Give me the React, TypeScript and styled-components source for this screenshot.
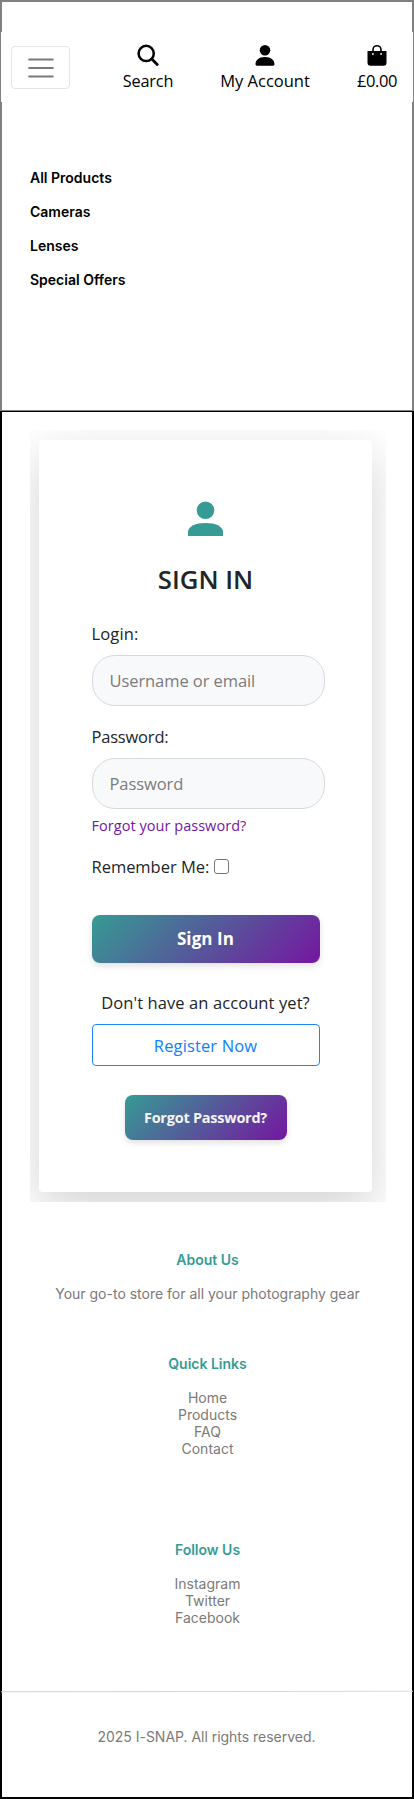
import React from "react";
import styled, { createGlobalStyle } from "styled-components";

const GlobalStyle = createGlobalStyle`
  *, *::before, *::after { box-sizing: border-box; }
  body { margin: 0; background: #fff; }
`;

const ui = `"Open Sans", "Noto Sans", sans-serif`;

const Page = styled.div`
  width: 414px;
  height: 1799px;
  display: flex;
  flex-direction: column;
  background: #fff;
  font-family: Inter, sans-serif;
`;

const Header = styled.header`
  height: 411px;
  padding-top: 30px;
  border: 2px solid #808080;
  border-bottom: 1px solid #808080;
`;

const NavBar = styled.div`
  display: flex;
  align-items: flex-start;
  height: 70px;
  margin: 0 -1px;
  padding: 14px 0 0 10px;
  background: #fff;
`;

const Toggler = styled.button`
  flex: none;
  width: 59px;
  height: 43px;
  padding: 0;
  display: flex;
  align-items: center;
  justify-content: center;
  background: #fff;
  border: 1px solid #e5e5e5;
  border-radius: 4px;
`;

const NavItem = styled.a<{ $left: number; $width: number }>`
  flex: none;
  display: flex;
  flex-direction: column;
  align-items: center;
  gap: 3px;
  width: ${(p) => p.$width}px;
  margin-left: ${(p) => p.$left}px;
  margin-top: -2px;
  color: #000;
`;

const Text = styled.span<{ $size?: number; $track?: number; $weight?: number; $color?: string; $line?: number }>`
  display: block;
  white-space: nowrap;
  font-family: ${ui};
  font-size: ${(p) => p.$size ?? 16.5}px;
  line-height: ${(p) => p.$line ?? 24}px;
  letter-spacing: ${(p) => p.$track ?? 0}px;
  font-weight: ${(p) => p.$weight ?? 400};
  color: ${(p) => p.$color ?? "#212529"};
`;

const Categories = styled.nav`
  display: flex;
  flex-direction: column;
  gap: 17px;
  padding: 67px 0 0 28px;
`;

const Category = styled.a`
  font-size: 14px;
  line-height: 17px;
  font-weight: 600;
  color: #000;
`;

const Main = styled.main`
  flex: 1;
  display: flex;
  flex-direction: column;
  border: 2px solid #000;
  border-top-width: 1px;
`;

const Backdrop = styled.section`
  width: 356px;
  height: 772px;
  margin: 18px 0 0 28px;
  padding: 10px 14px 10px 9px;
  overflow: hidden;
`;

const Card = styled.form`
  width: 333px;
  height: 752px;
  padding: 61px 52.5px 0 52.5px;
  display: flex;
  flex-direction: column;
  background: #fff;
  border-radius: 4px;
  box-shadow: 0 16px 48px rgba(0, 0, 0, 0.175);
`;

const Center = styled.div<{ $top?: number }>`
  display: flex;
  justify-content: center;
  margin-top: ${(p) => p.$top ?? 0}px;
`;

const Avatar = styled.svg`
  display: block;
  width: 35px;
  height: 36px;
  fill: #369b94;
`;

const Field = styled.label<{ $top: number }>`
  display: block;
  margin-top: ${(p) => p.$top}px;
`;

const Input = styled.input`
  display: block;
  width: 233px;
  height: 51px;
  margin-top: 9px;
  padding: 0 17px;
  font-family: ${ui};
  font-size: 16.5px;
  letter-spacing: -0.08px;
  background: #f8f9fb;
  border: 1px solid #d5d9de;
  border-radius: 23px;
  &::placeholder { color: #7b7b7b; opacity: 1; }
`;

const Remember = styled.label`
  display: flex;
  align-items: center;
  gap: 4.5px;
  margin-top: 13px;
`;

const Checkbox = styled.input`
  appearance: none;
  width: 15px;
  height: 15px;
  margin: 0 0 1px;
  border: 1px solid #767676;
  border-radius: 3px;
`;

const GradientButton = styled.button<{ $width: number; $height: number }>`
  width: ${(p) => p.$width}px;
  height: ${(p) => p.$height}px;
  padding: 0;
  display: flex;
  align-items: center;
  justify-content: center;
  border: 0;
  border-radius: 8px;
  background: linear-gradient(135deg, #369b94, #7516a0);
  box-shadow: 0 3px 6px rgba(0, 0, 0, 0.12);
`;

const OutlineButton = styled.button`
  width: 228px;
  height: 42px;
  margin-top: 9px;
  padding: 1px 0 0;
  display: flex;
  align-items: center;
  justify-content: center;
  background: #fff;
  border: 1px solid #1a86fb;
  border-radius: 4px;
`;

const FooterBlock = styled.section<{ $top: number }>`
  margin-top: ${(p) => p.$top}px;
  padding-left: 1px;
  display: flex;
  flex-direction: column;
  align-items: center;
  font-size: 14px;
  line-height: 17px;
  color: #7b7979;
`;

const Copyright = styled(FooterBlock)`
  padding: 0 1px 0 0;
  letter-spacing: -0.02px;
`;

const FooterTitle = styled.h2`
  margin: 0 0 17px;
  font-size: 14px;
  line-height: 17px;
  font-weight: 600;
  color: #369b94;
`;

const Rule = styled.div`
  height: 1px;
  margin: 65px -1px 0;
  background: linear-gradient(90deg, #cfcfcf, #dadada);
  transform: rotate(-0.08deg);
`;

export default function App() {
  return (
    <Page>
      <GlobalStyle />
      <Header>
        <NavBar>
          <Toggler type="button" aria-label="Menu">
            <svg width="32" height="32" viewBox="0 0 30 30" stroke="#7b7b7b" strokeWidth="2" strokeLinecap="round">
              <path d="M4 7h22M4 15h22M4 23h22" />
            </svg>
          </Toggler>
          <NavItem $left={49.5} $width={57}>
            <svg width="22" height="22" viewBox="0 0 22 22" fill="none" stroke="currentColor" strokeLinecap="round">
              <circle cx="9.2" cy="9.4" r="7.6" strokeWidth="2.5" />
              <path d="M14.8 15l5.4 5.5" strokeWidth="2.8" />
            </svg>
            <Text $color="#000" $size={16.3} $track={-0.15}>Search</Text>
          </NavItem>
          <NavItem $left={38.5} $width={100}>
            <svg width="22" height="22" viewBox="0 0 22 22" fill="currentColor">
              <circle cx="11" cy="6.2" r="5.3" />
              <path d="M1.5 20.3c0-4 3-7.3 9.5-7.3s9.5 3.3 9.5 7.3q0 1.4-1.4 1.4h-16.2q-1.4 0-1.4-1.4z" />
            </svg>
            <Text $color="#000">My Account</Text>
          </NavItem>
          <NavItem $left={37} $width={50}>
            <svg width="22" height="22" viewBox="0 0 22 22" fill="currentColor">
              <path d="M7 9V5.7a4 4 0 0 1 8 0V9" fill="none" stroke="currentColor" strokeWidth="1.6" />
              <path d="M1.5 7h19v11.7a3 3 0 0 1-3 3h-13a3 3 0 0 1-3-3z" />
              <circle cx="6.9" cy="10" r="0.9" fill="#fff" />
              <circle cx="15.1" cy="10" r="0.9" fill="#fff" />
            </svg>
            <Text $color="#000" $track={-0.4}>£0.00</Text>
          </NavItem>
        </NavBar>
        <Categories>
          <Category>All Products</Category>
          <Category>Cameras</Category>
          <Category>Lenses</Category>
          <Category>Special Offers</Category>
        </Categories>
      </Header>
      <Main>
        <Backdrop>
          <Card>
            <Center>
              <Avatar viewBox="0 0 36 36">
                <circle cx="18" cy="9" r="9" />
                <path d="M0 35.5V31c0-5.5 8-9 18-9s18 3.5 18 9v4.5z" />
              </Avatar>
            </Center>
            <Center $top={25}>
              <Text $size={25.7} $weight={600} $line={36}>SIGN IN</Text>
            </Center>
            <Field $top={24}>
              <Text $track={0.15}>Login:</Text>
              <Input placeholder="Username or email" />
            </Field>
            <Field $top={19}>
              <Text $track={-0.2}>Password:</Text>
              <Input type="password" placeholder="Password" />
            </Field>
            <Text $size={14.5} $track={0.04} $color="#7516a0" $line={33}>Forgot your password?</Text>
            <Remember>
              <Text $track={-0.03}>Remember Me:</Text>
              <Checkbox type="checkbox" />
            </Remember>
            <Center $top={36}>
              <GradientButton type="button" $width={228} $height={48}>
                <Text $size={17} $track={0.1} $line={22} $weight={700} $color="#fff">Sign In</Text>
              </GradientButton>
            </Center>
            <Center $top={28}>
              <Text $track={0.09}>Don't have an account yet?</Text>
            </Center>
            <OutlineButton type="button">
              <Text $color="#0d80fb" $track={0.13}>Register Now</Text>
            </OutlineButton>
            <Center $top={29}>
              <GradientButton type="button" $width={162} $height={45}>
                <Text $size={14.5} $weight={700} $track={-0.25} $color="#f4f4f4">Forgot Password?</Text>
              </GradientButton>
            </Center>
          </Card>
        </Backdrop>
        <FooterBlock $top={49}>
          <FooterTitle>About Us</FooterTitle>
          <span>Your go-to store for all your photography gear</span>
        </FooterBlock>
        <FooterBlock $top={53}>
          <FooterTitle>Quick Links</FooterTitle>
          <span>Home</span>
          <span>Products</span>
          <span>FAQ</span>
          <span>Contact</span>
        </FooterBlock>
        <FooterBlock $top={84}>
          <FooterTitle>Follow Us</FooterTitle>
          <span>Instagram</span>
          <span>Twitter</span>
          <span>Facebook</span>
        </FooterBlock>
        <Rule />
        <Copyright $top={36}>
          <span>2025 I-SNAP. All rights reserved.</span>
        </Copyright>
      </Main>
    </Page>
  );
}
